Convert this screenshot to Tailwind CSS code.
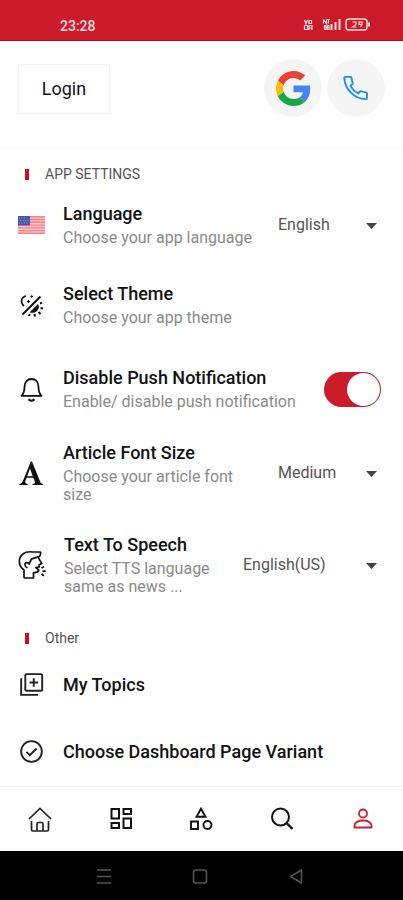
<!DOCTYPE html>
<html lang="en">
<head>
<meta charset="utf-8">
<meta name="viewport" content="width=device-width, initial-scale=1">
<title>App Settings</title>
<script src="https://cdn.jsdelivr.net/npm/@tailwindcss/browser@4"></script>
</head>
<body class="flex min-h-screen flex-col bg-white font-['Roboto',sans-serif] text-[#111]">

<header>
  <div class="flex h-[41px] items-end justify-between border-b border-[#b80d18] bg-[#cb1a2a] pr-8 pb-1 pl-15 text-[#fbdcdc]">
    <time class="text-sm font-medium">23:28</time>
    <svg class="h-5 w-[68px]" viewBox="0 0 68 20" fill="none" stroke="currentColor" role="img" aria-label="Signal and battery 29 percent">
      <g stroke-width="1.200"><path d="M1.500 4l1.500 4L4.500 4M6 4.500h2.500v3H6zM1.500 9.500h3v4h-3zM6 14V9.500h3V14M6 12h3"/><path d="M20.500 3.500v4M20.500 3.500l3 4v-4M24 3.500h3M25.500 3.500v4M21.500 9.500h1.500v4h-1.500zM24.500 9.500H26v4h-1.500z"/></g>
      <path stroke-width="2" d="M28.500 14V8M32.500 14V6M36.500 14V3"/>
      <rect x="43" y="3" width="21" height="11" rx="3" stroke-width="1.500"/>
      <path stroke-width="2" d="M66 6.500v4"/>
      <path stroke-width="1.200" d="M49.500 6h3.500v2.500L49.500 11h4M59 8.500h-3V6h3v2.500L57.500 11"/>
    </svg>
  </div>
  <div class="flex h-[107px] items-start justify-between border-b border-[#f5f5f5] pt-[18px] pr-[18px] pl-[18px]">
    <button type="button" class="mt-[5px] h-[50px] w-[92px] border border-[#f1f1f1] text-lg">Login</button>
    <div class="flex gap-[5px]">
      <button type="button" aria-label="Sign in with Google" class="flex size-[58px] items-center justify-center rounded-full bg-[#f5f5f5]">
        <svg class="size-[35px]" viewBox="0 0 48 48"><path fill="#ea4335" d="M24 9.500c3.540 0 6.710 1.220 9.210 3.600l6.850-6.850C35.900 2.380 30.470 0 24 0 14.620 0 6.510 5.380 2.560 13.220l7.980 6.190C12.430 13.720 17.740 9.500 24 9.500z"/><path fill="#4285f4" d="M46.980 24.550c0-1.570-.15-3.090-.38-4.550H24v9.020h12.940c-.58 2.960-2.260 5.480-4.780 7.180l7.730 6c4.510-4.180 7.090-10.360 7.090-17.650z"/><path fill="#fbbc05" d="M10.530 28.590c-.48-1.450-.76-2.990-.76-4.590s.27-3.140.76-4.590l-7.980-6.190C.92 16.460 0 20.120 0 24c0 3.880.92 7.540 2.560 10.780l7.970-6.190z"/><path fill="#17a846" d="M24 48c6.480 0 11.930-2.130 15.890-5.810l-7.730-6c-2.150 1.450-4.920 2.300-8.160 2.300-6.260 0-11.570-4.220-13.470-9.910l-7.980 6.190C6.510 42.620 14.620 48 24 48z"/></svg>
      </button>
      <button type="button" aria-label="Sign in with phone" class="flex size-[58px] items-center justify-center rounded-full bg-[#f5f5f5]">
        <svg class="size-7 text-[#1b8fe0]" viewBox="0 0 24 24" fill="none" stroke="currentColor" stroke-width="1.600" stroke-linejoin="round"><path d="M3 2.500h4.200a1 1 0 0 1 1 .9c.1 1.500.4 2.800.9 4a1 1 0 0 1-.2 1.100L7.200 10.200c1.500 2.800 3.700 5 6.600 6.500l1.700-1.700a1 1 0 0 1 1.100-.2c1.200.5 2.500.8 3.900.9a1 1 0 0 1 .9 1v3.900a1 1 0 0 1-1 1C10.800 21.400 2.600 13.500 2 3.500a1 1 0 0 1 1-1z"/></svg>
      </button>
    </div>
  </div>
</header>

<main class="flex-1">
  <section>
    <h2 class="flex items-center gap-4 pt-[17px] pl-[25px] text-sm leading-[18px] text-[#555]"><span class="h-[11px] w-1 bg-[#cc1020]"></span>APP SETTINGS</h2>

    <div class="flex h-20 items-center pr-[19px] pl-[18px]">
      <svg class="mt-1 mr-[18px] h-[18px] w-[27px] shrink-0" viewBox="0 0 27 18" aria-hidden="true"><rect width="27" height="18" rx="1" fill="#fbc5c9"/><path stroke="#f0838d" stroke-width="1.400" d="M0 .7h27M0 3.500h27M0 6.300h27M0 9.100h27M0 11.900h27M0 14.600h27M0 17.300h27"/><rect width="12" height="9.500" fill="#4a55a5"/><path stroke="#8c94cb" stroke-dasharray="1 1.500" d="M1 2h10M2 4.500h9M1 7h10"/></svg>
      <div class="flex-1">
        <label for="language" class="block text-lg leading-[30px] font-medium">Language</label>
        <p class="text-base leading-[18px] text-[#8a8a8a]">Choose your app language</p>
      </div>
      <div class="relative mt-1 w-[106px]">
        <select id="language" class="w-full appearance-none bg-transparent text-base text-[#555]"><option>English</option></select>
        <svg class="pointer-events-none absolute top-[10px] right-[7px] h-[6px] w-[11px]" viewBox="0 0 11 6" aria-hidden="true"><path fill="#444" d="M0 0h11L5.500 6z"/></svg>
      </div>
    </div>

    <div class="flex h-20 items-center pr-[19px] pl-[18px]">
      <svg class="mt-1 mr-[18px] h-[27px] w-[27px] shrink-0" viewBox="0 0 27 27" fill="none" stroke="#111" aria-hidden="true"><path stroke-width="2" d="M4.500 22.500L22.500 4.500"/><path stroke-width="1.600" d="M8 4c-5 1-6 7-2 10"/><path stroke-width="1.200" d="M9 9.500h3M10.500 8v3M12.500 4.500h2.500M13.700 3.300v2.500"/><path fill="#111" stroke="none" d="M11.500 20.500l8.500-8.500c3 4-1.500 10.500-8.500 8.500z"/><path stroke-width="2" d="M22 11.500l2-.8M22.500 16l2.500.5M20.500 20l2 2M16.500 22l.5 2.500M11.800 22l-.8 2"/></svg>
      <div class="flex-1">
        <h3 class="text-lg leading-[30px] font-medium">Select Theme</h3>
        <p class="text-base leading-[18px] text-[#8a8a8a]">Choose your app theme</p>
      </div>
    </div>

    <div class="flex h-22 items-center pr-[22px] pl-[18px]">
      <svg class="mt-1 mr-[18px] h-[27px] w-[27px] shrink-0" viewBox="0 0 27 27" fill="none" stroke="#111" stroke-width="1.800" stroke-linejoin="round" aria-hidden="true"><path d="M3.500 19.800c2.500-2.500 3-4 3-8.800 0-5 3-8 7-8s7 3 7 8c0 4.800.5 6.300 3 8.800z"/><path stroke-width="2" d="M10.500 23.300c1.800 1.800 4.200 1.800 6 0"/></svg>
      <div class="flex-1">
        <label for="push" class="block text-lg leading-[30px] font-medium">Disable Push Notification</label>
        <p class="text-base leading-[18px] text-[#8a8a8a]">Enable/ disable push notification</p>
      </div>
      <input id="push" type="checkbox" role="switch" checked class="mt-1 flex h-[35px] w-[57px] shrink-0 appearance-none justify-start rounded-full bg-[#cb1a2a] p-px before:size-[33px] before:rounded-full before:bg-white before:content-[''] checked:justify-end">
    </div>

    <div class="flex h-20 items-center pr-[19px] pl-[18px]">
      <svg class="mt-1 mr-[18px] h-[27px] w-[27px] shrink-0" viewBox="0 0 27 27" aria-hidden="true"><path fill="#111" fill-rule="evenodd" d="M14 1.500l8.300 20.500c.5 1.200 1.200 1.700 2.700 1.900V25H14.500v-1.100c2.500-.1 3-.7 2.300-2.400l-1.500-3.800H8.600L7.400 21c-.6 1.800 0 2.700 2.300 2.900V25H1.500v-1.100c1.900-.3 2.700-1.200 3.500-3.100L12.800 1.500zM12 8.500L9.200 16.200h5.500z"/></svg>
      <div class="flex-1 pr-5">
        <label for="fontsize" class="block text-lg leading-[30px] font-medium">Article Font Size</label>
        <p class="text-base leading-[18px] text-[#8a8a8a]">Choose your article font size</p>
      </div>
      <div class="relative mt-1 w-[106px]">
        <select id="fontsize" class="w-full appearance-none bg-transparent text-base text-[#555]"><option>Medium</option></select>
        <svg class="pointer-events-none absolute top-[10px] right-[7px] h-[6px] w-[11px]" viewBox="0 0 11 6" aria-hidden="true"><path fill="#444" d="M0 0h11L5.500 6z"/></svg>
      </div>
    </div>

    <div class="flex h-26 items-center pr-[19px] pl-[18px]">
      <svg class="mt-1 mr-[18px] h-[30px] w-[28px] shrink-0" viewBox="0 0 28 30" fill="none" stroke="#111" stroke-width="1.700" stroke-linejoin="round" aria-hidden="true"><path d="M6 28v-8C.5 16.500-.5 8 5 4c3-2.500 7-2.500 10-2h7.500c.5 2-.5 4-2 5 0 2.500 2.500 4.500 3.300 6.500L21 15l.3 2-3.500.5 3 2.500c-.5 2-2 2.800-5.300 2.500V28H6"/><path d="M20.500 6.500c-2 1.500-5 1.500-7 2.500-1 1.500-1.300 3-2.500 5-1.500-2.500-4.500-1.500-4 1 .2 1.500 1 2.500 2.500 3"/><path stroke-width="1.800" d="M23.500 18l2.500-1.200M24.500 21.200h3.200M23.500 24l2.500 1.800"/></svg>
      <div class="flex-1 pr-5">
        <label for="tts" class="block text-lg leading-[30px] font-medium">Text To Speech</label>
        <p class="text-base leading-[18px] text-[#8a8a8a]">Select TTS language same as news ...</p>
      </div>
      <div class="relative mt-1 w-[141px]">
        <select id="tts" class="w-full appearance-none bg-transparent text-base text-[#555]"><option>English(US)</option></select>
        <svg class="pointer-events-none absolute top-[10px] right-[7px] h-[6px] w-[11px]" viewBox="0 0 11 6" aria-hidden="true"><path fill="#444" d="M0 0h11L5.500 6z"/></svg>
      </div>
    </div>
  </section>

  <section>
    <h2 class="flex items-center gap-4 pt-[14px] pb-1 pl-[25px] text-sm leading-[18px] text-[#555]"><span class="h-[11px] w-1 bg-[#cc1020]"></span>Other</h2>
    <a href="#topics" class="flex h-[67px] items-center gap-[18px] px-[18px] text-lg font-medium">
      <svg class="size-[27px]" viewBox="0 0 24 24" fill="none" stroke="#222" stroke-width="1.700" aria-hidden="true"><rect x="6.500" y="2.800" width="15" height="14.800" rx="1"/><path d="M14 6.500v7.500M10.300 10.200h7.500M2.800 6.500v14.700h15"/></svg>My Topics</a>
    <a href="#variant" class="flex h-[67px] items-center gap-[18px] px-[18px] text-lg font-medium">
      <svg class="size-[27px]" viewBox="0 0 24 24" fill="none" stroke="#222" stroke-width="1.700" aria-hidden="true"><circle cx="12" cy="12" r="9.200"/><path d="M7.500 12.300l3 3 6-6"/></svg>Choose Dashboard Page Variant</a>
  </section>
</main>

<footer>
  <nav class="grid h-[65px] grid-cols-5 border-t border-[#f3f3f3]" aria-label="Main">
    <a href="#home" aria-label="Home" class="flex items-center justify-center"><svg class="size-7" viewBox="0 0 28 28" fill="none" stroke="#222" stroke-width="1.700"><path d="M3 14L14 3.500 25 14"/><path d="M5.500 16v8.500c0 1 .5 1.500 1.500 1.500h14c1 0 1.500-.5 1.500-1.500V16M11 26v-7c0-1 .4-1.500 1.500-1.500h3c1.100 0 1.500.5 1.500 1.500v7"/></svg></a>
    <a href="#dashboard" aria-label="Dashboard" class="flex items-center justify-center"><svg class="size-7" viewBox="0 0 28 28" fill="none" stroke="#111" stroke-width="2"><path d="M4.500 4H12v9.500H4.500zM16.500 4H24v5h-7.500zM4.500 18H12v5H4.500zM16.500 13.500H24V23h-7.500z"/></svg></a>
    <a href="#categories" aria-label="Categories" class="flex items-center justify-center"><svg class="size-7" viewBox="0 0 28 28" fill="none" stroke="#111" stroke-width="1.900"><path d="M14 3.800l4.500 8h-9zM4 16.500h7V24H4z"/><circle cx="20.500" cy="20" r="4"/></svg></a>
    <a href="#search" aria-label="Search" class="flex items-center justify-center"><svg class="size-7" viewBox="0 0 28 28" fill="none" stroke="#111" stroke-width="2"><circle cx="12.500" cy="12" r="8.500"/><path stroke-width="2.400" d="M18.500 18l6 6"/></svg></a>
    <a href="#profile" aria-label="Profile" aria-current="page" class="flex items-center justify-center"><svg class="size-7" viewBox="0 0 28 28" fill="none" stroke="#c81e30" stroke-width="1.800"><circle cx="14" cy="8.500" r="4"/><path d="M5.500 22.500v-2c0-3 4-5 8.500-5s8.500 2 8.500 5v2z"/></svg></a>
  </nav>
  <div class="flex h-[49px] items-center justify-center gap-[76px] bg-black pr-[3px] text-[#555]">
    <button type="button" aria-label="Recent apps"><svg class="size-5" viewBox="0 0 20 20" fill="none" stroke="currentColor" stroke-width="1.500"><path d="M3 4h14M3 10.500h14M3 17h14"/></svg></button>
    <button type="button" aria-label="Home screen"><svg class="size-5" viewBox="0 0 20 20" fill="none" stroke="currentColor" stroke-width="1.500"><rect x="3.500" y="4" width="13" height="13" rx="2.500"/></svg></button>
    <button type="button" aria-label="Back"><svg class="size-5" viewBox="0 0 20 20" fill="none" stroke="currentColor" stroke-width="1.500" stroke-linejoin="round"><path d="M15.500 4v13L4.500 10.500z"/></svg></button>
  </div>
</footer>
</body>
</html>
